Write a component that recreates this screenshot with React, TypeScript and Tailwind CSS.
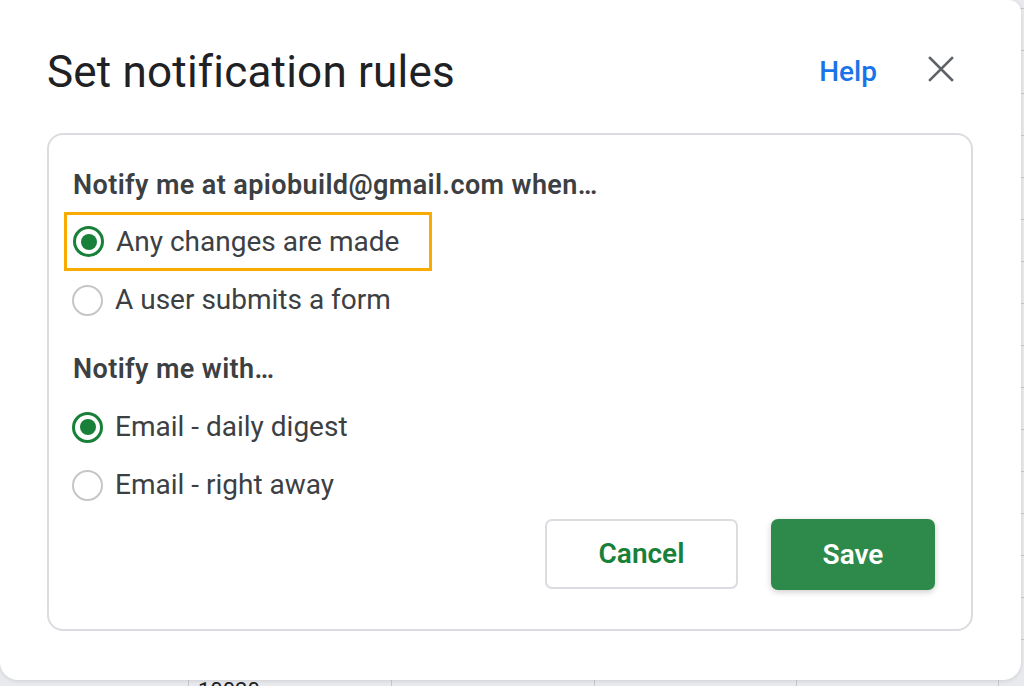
import React from "react";

function Radio({ checked }: { checked: boolean }) {
  if (checked) {
    return (
      <span className="flex h-[31px] w-[31px] shrink-0 items-center justify-center rounded-full border-[3px] border-[#188038]">
        <span className="block h-[16px] w-[16px] rounded-full bg-[#188038]" />
      </span>
    );
  }
  return <span className="block h-[31px] w-[31px] shrink-0 rounded-full border-2 border-[#c6c6c6]" />;
}

function Option({ label, checked }: { label: string; checked: boolean }) {
  return (
    <div className="flex h-[58px] items-center gap-[12px] pl-[23px]">
      <Radio checked={checked} />
      <span className="text-[28px] text-[#3c4043]">{label}</span>
    </div>
  );
}

export default function App() {
  const cols = [188, 391, 594, 796, 998];
  const rows = [8, 50, 93, 135, 177, 219, 261, 303, 345, 387, 429, 471, 513, 555, 597, 639];
  return (
    <div
      className="relative h-[686px] w-[1024px] overflow-hidden bg-[#e8eaed]"
      style={{ fontFamily: "Roboto, 'Open Sans', sans-serif" }}
    >
      {/* spreadsheet behind the dialog */}
      {cols.map((x) => (
        <div key={x} className="absolute top-0 h-full w-px bg-[#c7c9cc]" style={{ left: x }} />
      ))}
      {rows.map((y) => (
        <div key={y} className="absolute left-0 h-px w-full bg-[#c7c9cc]" style={{ top: y }} />
      ))}
      <div className="absolute left-[198px] top-[680px] text-[22px] leading-none text-[#202124]">10020</div>

      <div className="absolute left-0 top-0 flex h-[680px] w-[1021px] flex-col rounded-b-[18px] rounded-tr-[12px] bg-white shadow-[0_1px_4px_rgba(0,0,0,0.12)]">
        <div className="flex h-[133px] items-start pl-[47px] pr-[67px] pt-[47px]">
          <h1 className="flex-1 text-[44px] leading-[50px] tracking-[0.2px] text-[#202124]">Set notification rules</h1>
          <a className="mt-[9px] text-[28px] font-medium leading-[32px] text-[#1a73e8]">Help</a>
          <svg className="ml-[51px] mt-[9px]" width="26" height="26" viewBox="0 0 26 26">
            <path d="M2 2 L24 24 M24 2 L2 24" stroke="#5f6368" strokeWidth="2.6" strokeLinecap="square" />
          </svg>
        </div>

        <div className="mx-[47px] flex h-[498px] w-[926px] flex-col rounded-[16px] border-2 border-[#dadce0] pt-[33px]">
          <div className="pl-[24px] text-[27px] font-semibold leading-[34px] tracking-[0.4px] text-[#3c4043]">
            Notify me at apiobuild@gmail.com when…
          </div>
          <div className="ml-[15px] mt-[10px] w-[368px] border-[3px] border-[#f9ab00]">
            <div className="-ml-[18px]">
              <div className="flex h-[53px] items-center gap-[12px] pl-[24px]">
                <Radio checked />
                <span className="text-[28px] text-[#3c4043]">Any changes are made</span>
              </div>
            </div>
          </div>
          <Option label="A user submits a form" checked={false} />
          <div className="mt-[23px] pl-[24px] text-[27px] font-semibold leading-[34px] tracking-[0.4px] text-[#3c4043]">
            Notify me with…
          </div>
          <div className="mt-[12px]">
            <Option label="Email - daily digest" checked />
            <Option label="Email - right away" checked={false} />
          </div>
          <div className="mt-[5px] flex justify-end gap-[33px] pr-[36px]">
            <button className="h-[70px] w-[193px] rounded-[7px] border-2 border-[#dadce0] bg-white text-[28px] font-semibold text-[#188038]">
              Cancel
            </button>
            <button className="h-[71px] w-[164px] rounded-[7px] bg-[#2d8a4b] text-[28px] font-semibold text-white shadow-[0_2px_6px_rgba(0,0,0,0.2)]">
              Save
            </button>
          </div>
        </div>
      </div>
    </div>
  );
}
